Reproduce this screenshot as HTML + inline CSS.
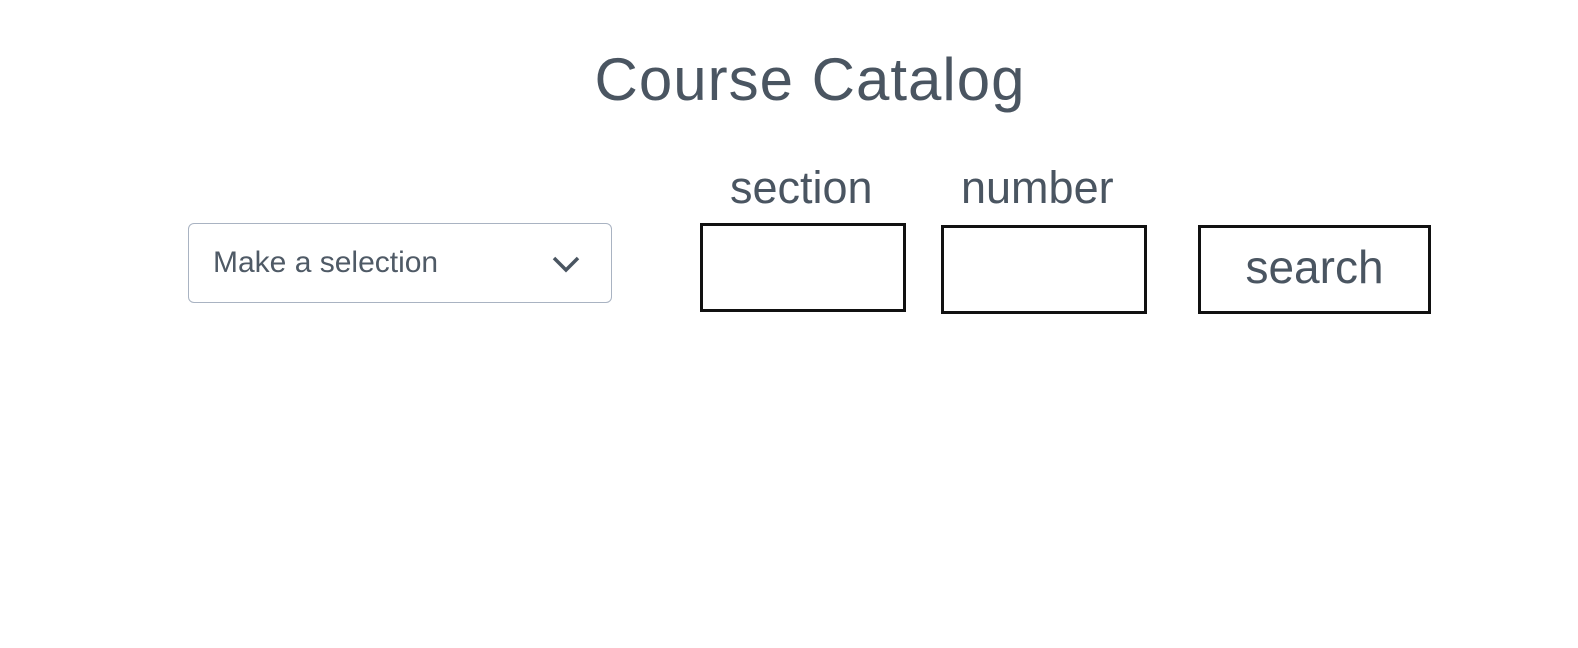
<!DOCTYPE html>
<html><head><meta charset="utf-8"><style>
html,body{margin:0;padding:0;background:#fff;width:1578px;height:648px;overflow:hidden;font-family:"Liberation Sans",sans-serif;color:#4a5561}
.a{position:absolute}
h1{position:absolute;left:0;width:1536px;padding-left:42px;text-align:center;top:45px;margin:0;font-weight:normal;font-size:60px;color:#4a5561;letter-spacing:1px}
.lbl{font-size:45px;line-height:42px}
.box{border:3px solid #111;box-sizing:border-box;background:#fff}
</style></head><body>
<h1>Course Catalog</h1>
<div class="a" style="left:188px;top:223px;width:424px;height:80px;border:1.5px solid #a9b3c2;border-radius:6px;box-sizing:border-box"></div>
<div class="a" style="left:213px;top:246px;font-size:30px;line-height:34px;color:#4f5a66">Make a selection</div>
<svg class="a" style="left:551px;top:254px" width="30" height="20" viewBox="0 0 30 20"><path d="M3 4 L15 16 L27 4" fill="none" stroke="#4a5561" stroke-width="3.5"/></svg>
<div class="a lbl" style="left:730px;top:167px">section</div>
<div class="a lbl" style="left:961px;top:167px">number</div>
<div class="a box" style="left:700px;top:223px;width:206px;height:89px"></div>
<div class="a box" style="left:941px;top:225px;width:206px;height:89px"></div>
<div class="a box" style="left:1198px;top:225px;width:233px;height:89px;font-size:46px;text-align:center;line-height:79px">search</div>
</body></html>
